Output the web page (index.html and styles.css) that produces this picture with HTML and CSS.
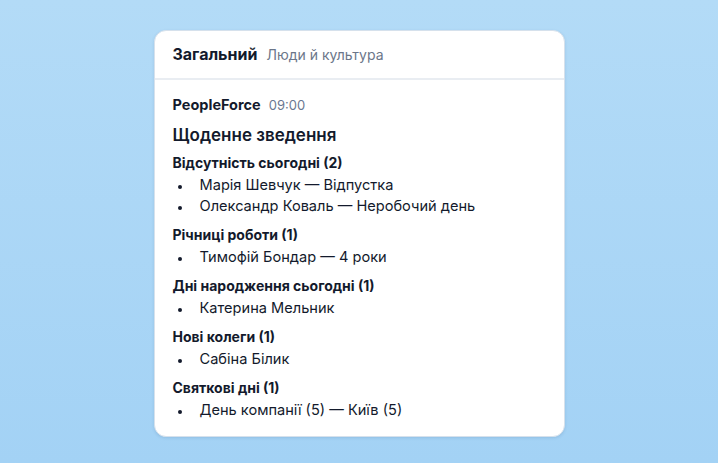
FILE: index.html
```html
<!DOCTYPE html>
<html lang="uk">
<head>
    <meta charset="UTF-8">
    <title>Загальний — Люди й культура</title>
    <link rel="stylesheet" href="styles.css">
</head>
<body>
    <div class="card">
        <header class="card-head">
            <span class="channel">Загальний</span>
            <span class="topic">Люди й культура</span>
        </header>
        <div class="message">
            <div class="meta">
                <span class="sender">PeopleForce</span>
                <span class="time">09:00</span>
            </div>
            <h1>Щоденне зведення</h1>
            <section>
                <h2>Відсутність сьогодні (2)</h2>
                <ul>
                    <li>Марія Шевчук — Відпустка</li>
                    <li>Олександр Коваль — Неробочий день</li>
                </ul>
            </section>
            <section>
                <h2>Річниці роботи (1)</h2>
                <ul>
                    <li>Тимофій Бондар — 4 роки</li>
                </ul>
            </section>
            <section>
                <h2>Дні народження сьогодні (1)</h2>
                <ul>
                    <li>Катерина Мельник</li>
                </ul>
            </section>
            <section>
                <h2>Нові колеги (1)</h2>
                <ul>
                    <li>Сабіна Білик</li>
                </ul>
            </section>
            <section>
                <h2>Святкові дні (1)</h2>
                <ul>
                    <li>День компанії (5) — Київ (5)</li>
                </ul>
            </section>
        </div>
    </div>
</body>
</html>
```

FILE: styles.css
```css
* {
    margin: 0;
    padding: 0;
    box-sizing: border-box;
}
body {
    font-family: Inter, "Noto Sans", sans-serif;
    color: #131a2c;
    height: 463px;
    background: linear-gradient(180deg, #b3dbf7 0%, #a3d2f5 100%);
    padding-top: 30px;
}
.card {
    width: 411px;
    margin: 0 auto;
    background: #fff;
    border: 1px solid #d6e1ec;
    border-radius: 12px;
    box-shadow: 0 1px 3px rgba(40, 80, 130, 0.15);
}
.card-head {
    height: 49px;
    padding: 0 18px 1px;
    display: flex;
    align-items: center;
    gap: 9px;
    border-bottom: 2px solid #e9edf2;
}
.channel {
    font-size: 16px;
    font-weight: 700;
}
.topic {
    font-size: 14px;
    color: #6b7689;
}
.message {
    padding: 15px 18px 15px;
}
.meta {
    display: flex;
    align-items: baseline;
    gap: 8px;
    line-height: 20px;
}
.sender {
    font-size: 14.5px;
    font-weight: 700;
}
.time {
    font-size: 13px;
    color: #6a7891;
}
h1 {
    font-size: 17px;
    font-weight: 600;
    line-height: 22px;
    margin-top: 9px;
}
section {
    margin-top: 8px;
}
h1 + section {
    margin-top: 7px;
}
h2 {
    font-size: 14px;
    font-weight: 700;
    line-height: 20px;
    margin-bottom: 2px;
}
ul {
    list-style: none;
    padding-left: 5px;
    font-size: 14.6px;
    line-height: 21px;
}
li {
    display: flex;
    align-items: center;
    gap: 18px;
}
li::before {
    content: "";
    width: 4px;
    height: 4px;
    border-radius: 50%;
    background: #131a2c;
    margin-top: 2px;
}
```
